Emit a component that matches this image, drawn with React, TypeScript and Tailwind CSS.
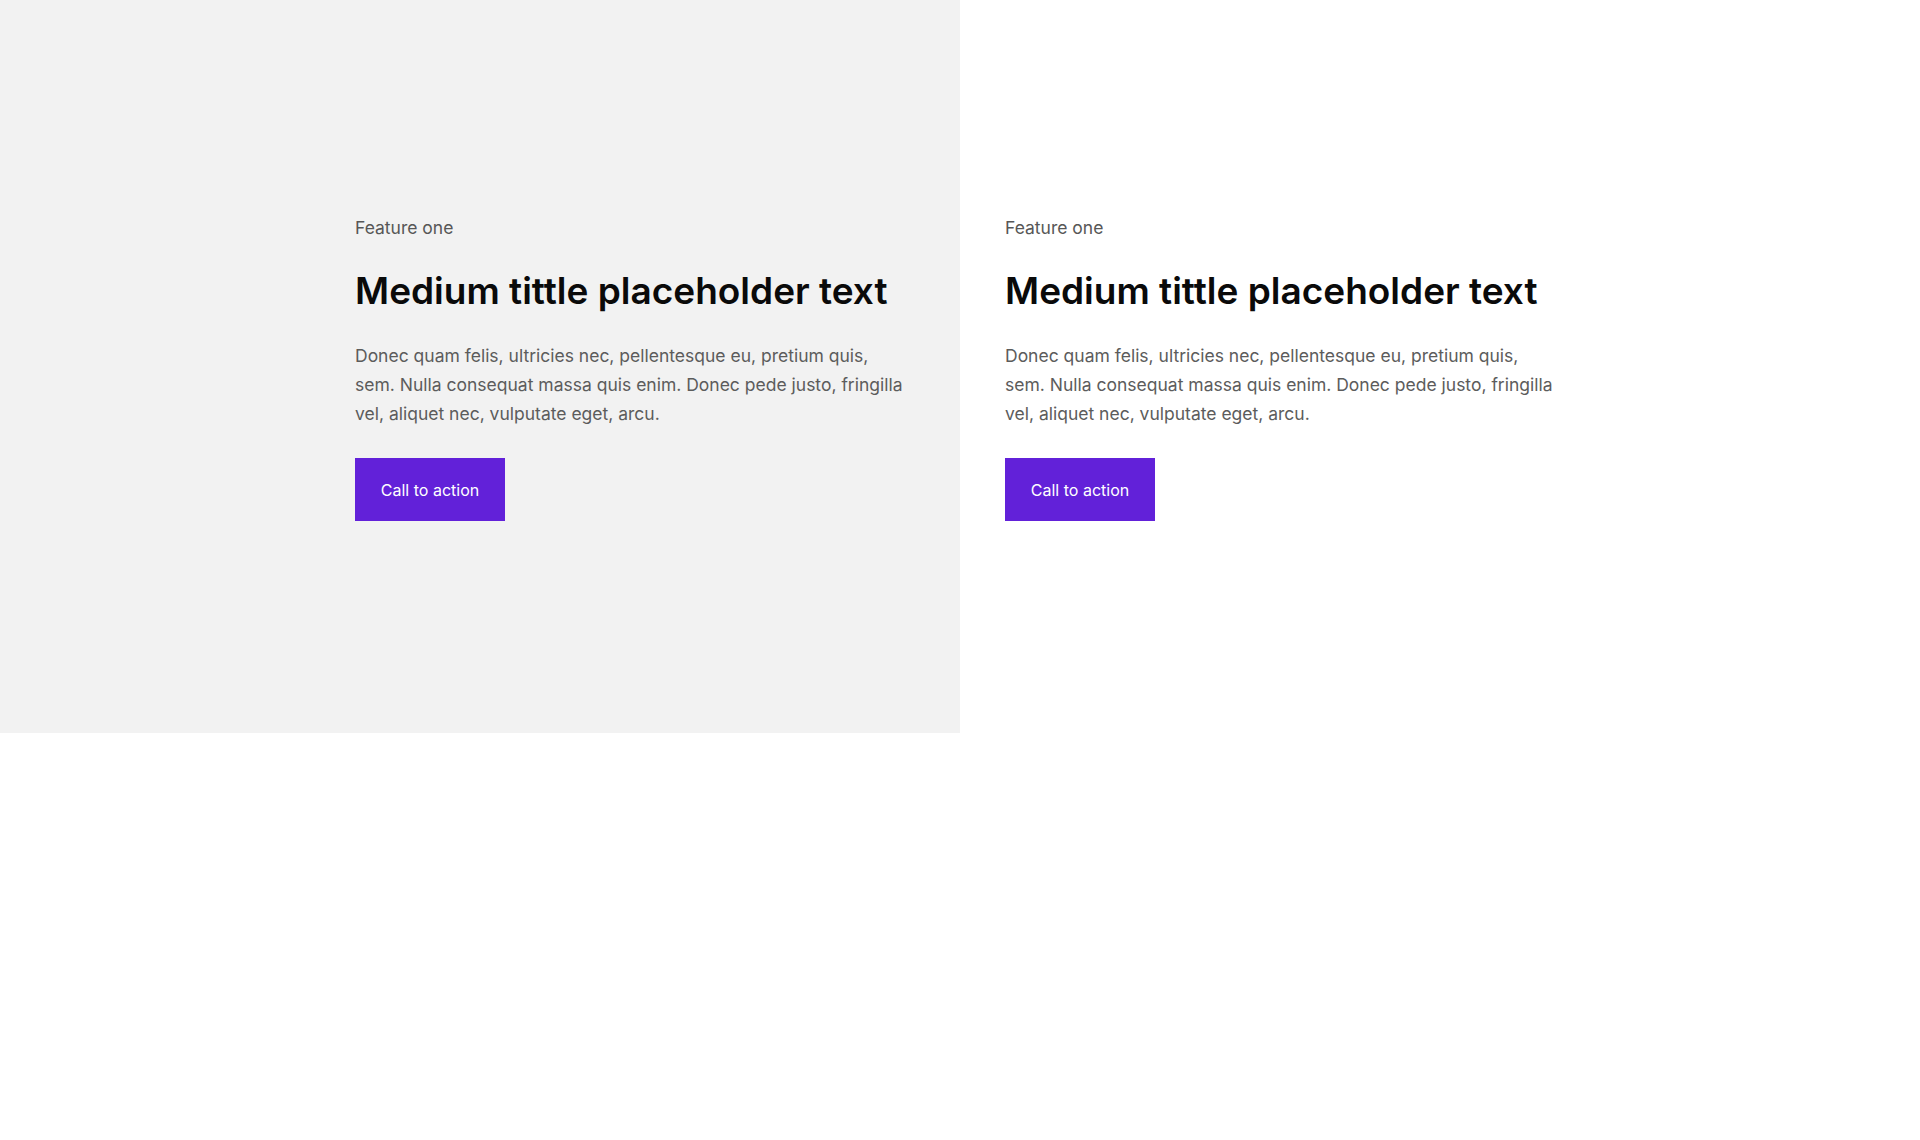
import React from "react";

const inter = { fontFamily: "Inter, 'Liberation Sans', sans-serif" };

function Feature() {
  return (
    <div className="flex w-[580px] flex-col items-start" style={inter}>
      <p className="text-[17.5px] leading-[28px] text-[#575757]">Feature one</p>
      <h2 className="mt-[27px] text-[37px] leading-[44px] font-semibold text-[#0a0a0a]">
        Medium tittle placeholder text
      </h2>
      <p className="mt-[28px] text-[17.5px] leading-[29px] text-[#5c5c5c]">
        Donec quam felis, ultricies nec, pellentesque eu, pretium quis,
        <br />
        sem. Nulla consequat massa quis enim. Donec pede justo, fringilla
        <br />
        vel, aliquet nec, vulputate eget, arcu.
      </p>
      <button className="mt-[30px] flex h-[63px] w-[150px] items-center justify-center bg-[#6221d9] text-[16px] font-normal text-white">
        Call to action
      </button>
    </div>
  );
}

export default function App() {
  return (
    <div className="min-h-[1140px] w-[1920px] bg-white">
      <div className="flex">
        <div className="flex h-[733px] w-[960px] items-start bg-[#f2f2f2] pl-[355px] pt-[214px]">
          <Feature />
        </div>
        <div className="flex h-[733px] w-[960px] items-start bg-white pl-[45px] pt-[214px]">
          <Feature />
        </div>
      </div>
    </div>
  );
}
